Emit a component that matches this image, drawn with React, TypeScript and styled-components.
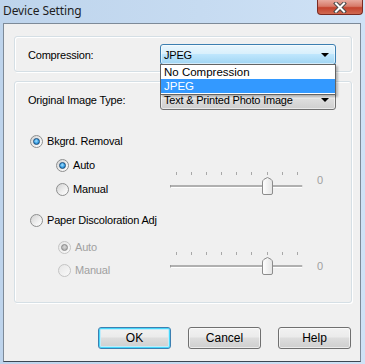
import * as React from "react";
import styled, { createGlobalStyle } from "styled-components";

const GlobalStyle = createGlobalStyle`
  html, body {
    margin: 0;
    padding: 0;
    background: #fff;
  }
  body {
    font-family: "Liberation Sans", Arial, sans-serif;
    font-size: 11px;
    letter-spacing: -0.2px;
    color: #000;
  }
`;

const Window = styled.div`
  width: 365px;
  height: 364px;
  box-sizing: border-box;
  display: flex;
  flex-direction: column;
  padding: 0 4px 2px 3px;
  background: linear-gradient(90deg, #bed4ec 0%, #c6dbf1 55%, #cfe2f6 100%);
`;

const TitleBar = styled.div`
  height: 23px;
  display: flex;
  align-items: flex-start;
  justify-content: space-between;
  flex-shrink: 0;
`;

const Title = styled.div`
  font-family: "Noto Sans", "Open Sans", sans-serif;
  font-size: 12px;
  color: #1e1e1e;
  padding-top: 2px;
  letter-spacing: -0.1px;
`;

const CloseButton = styled.div`
  width: 46px;
  height: 15px;
  margin-right: -2px;
  box-sizing: border-box;
  border: 1px solid #7a2b22;
  border-top: none;
  border-radius: 0 0 4px 4px;
  background: linear-gradient(180deg, #e8a99e 0%, #d77a69 45%, #c4432e 55%, #d06a52 100%);
  display: flex;
  align-items: center;
  justify-content: center;
`;

const Client = styled.div`
  flex: 1;
  display: flex;
  flex-direction: column;
  background: #f0f0f0;
  border: 1px solid #7d8a98;
  border-bottom-color: #3c4753;
`;

const GroupBox = styled.div<{ $top: number; $height: number }>`
  margin: ${(p) => p.$top}px 8px 0 10px;
  height: ${(p) => p.$height}px;
  box-sizing: border-box;
  border: 1px solid #d5dfe5;
  border-radius: 3px;
  box-shadow: inset 1px 1px 0 #fff, 1px 1px 0 #fff;
  padding: 7px 15px 0 13px;
  position: relative;
`;

const FieldRow = styled.div`
  display: flex;
  align-items: center;
  justify-content: space-between;
  height: 21px;
`;

const ComboWrap = styled.div`
  position: relative;
  width: 176px;
  height: 21px;
`;

const Combo = styled.div<{ $open?: boolean }>`
  height: 21px;
  box-sizing: border-box;
  border: 1px solid ${(p) => (p.$open ? "#3c7fb1" : "#707070")};
  border-radius: 3px;
  display: flex;
  align-items: center;
  justify-content: space-between;
  padding: 0 6px 0 3px;
  background: ${(p) =>
    p.$open
      ? "linear-gradient(180deg, #eaf6fd 0%, #d9f0fc 45%, #bee6fd 50%, #a0d5f3 100%)"
      : "linear-gradient(180deg, #f2f2f2 0%, #ebebeb 45%, #dddddd 50%, #cfcfcf 100%)"};
  box-shadow: inset 0 0 0 1px rgba(255, 255, 255, 0.55);
`;

const Arrow = styled.span`
  width: 0;
  height: 0;
  border-left: 4px solid transparent;
  border-right: 4px solid transparent;
  border-top: 4px solid #000;
  margin-top: 1px;
`;

const DropList = styled.div`
  position: absolute;
  top: 20px;
  left: 0;
  width: 176px;
  box-sizing: border-box;
  background: #fff;
  border: 1px solid #646464;
  box-shadow: 2px 2px 2px rgba(0, 0, 0, 0.25);
  z-index: 5;
  padding-bottom: 1px;
`;

const DropItem = styled.div<{ $selected?: boolean }>`
  height: 14px;
  line-height: 14px;
  padding-left: 3px;
  font-size: 11.5px;
  letter-spacing: 0;
  background: ${(p) => (p.$selected ? "#3399ff" : "transparent")};
  color: ${(p) => (p.$selected ? "#fff" : "#000")};
`;

const OptionRow = styled.div<{ $top: number; $indent: number; $disabled?: boolean }>`
  display: flex;
  align-items: center;
  height: 16px;
  margin-top: ${(p) => p.$top}px;
  margin-left: ${(p) => p.$indent}px;
  gap: 4px;
  color: ${(p) => (p.$disabled ? "#a0a0a0" : "#000")};
`;

const RadioCircle = styled.span<{ $disabled?: boolean }>`
  width: 13px;
  height: 13px;
  box-sizing: border-box;
  border-radius: 50%;
  border: 1px solid ${(p) => (p.$disabled ? "#c4c4c4" : "#8e8f8f")};
  background: ${(p) =>
    p.$disabled
      ? "linear-gradient(135deg, #e6e6e6, #fafafa)"
      : "linear-gradient(135deg, #d2d2d2 0%, #f0f0f0 60%, #ffffff 100%)"};
  display: flex;
  align-items: center;
  justify-content: center;
  flex-shrink: 0;
`;

const RadioDot = styled.span<{ $disabled?: boolean }>`
  width: 7px;
  height: 7px;
  border-radius: 50%;
  box-sizing: border-box;
  border: 1px solid ${(p) => (p.$disabled ? "#8a8a8a" : "#1b4d7b")};
  background: ${(p) =>
    p.$disabled
      ? "radial-gradient(circle at 50% 40%, #d8d8d8 0%, #a4a4a4 100%)"
      : "radial-gradient(circle at 45% 40%, #a8e2ff 0%, #38a0e6 55%, #1668a8 100%)"};
`;

const SubBlock = styled.div<{ $top: number }>`
  display: grid;
  grid-template-columns: 112px 137px auto;
  margin-top: ${(p) => p.$top}px;
  margin-left: 28px;
`;

const RadioColumn = styled.div`
  display: flex;
  flex-direction: column;
`;

const SliderBox = styled.div<{ $top: number }>`
  position: relative;
  height: 24px;
  margin-top: ${(p) => p.$top}px;
`;

const Ticks = styled.div`
  display: flex;
  gap: 14.1px;
  padding-left: 8px;
  height: 3px;
`;

const Tick = styled.span`
  width: 1px;
  height: 3px;
  background: #a8a8a8;
`;

const Track = styled.div`
  position: absolute;
  left: 2px;
  right: 2px;
  top: 13px;
  height: 2px;
  background: #b0b0b0;
  border-bottom: 1px solid #ffffff;
  border-left: 1px solid #9a9a9a;
  border-right: 1px solid #e0e0e0;
`;

const Thumb = styled.svg`
  position: absolute;
  top: 5px;
`;

const SliderValue = styled.div<{ $top: number }>`
  margin-top: ${(p) => p.$top}px;
  padding-left: 12px;
  color: #a0a0a0;
  font-size: 11px;
`;

const ButtonRow = styled.div`
  display: flex;
  justify-content: flex-end;
  gap: 17px;
  margin-top: 24px;
  padding-right: 9px;
`;

const Button = styled.div<{ $default?: boolean }>`
  width: 73px;
  height: 22px;
  box-sizing: border-box;
  border: 1px solid ${(p) => (p.$default ? "#3c7fb1" : "#707070")};
  border-radius: 3px;
  display: flex;
  align-items: center;
  justify-content: center;
  font-size: 12px;
  letter-spacing: 0;
  background: linear-gradient(180deg, #f2f2f2 0%, #ebebeb 45%, #dddddd 50%, #cfcfcf 100%);
  box-shadow: ${(p) =>
    p.$default ? "inset 0 0 0 1px #48d8fb, inset 0 0 0 2px #c2ecfa" : "inset 0 0 0 1px rgba(255,255,255,0.6)"};
`;

const Radio = ({
  checked,
  disabled,
}: {
  checked?: boolean;
  disabled?: boolean;
}) => (
  <RadioCircle $disabled={disabled}>{checked && <RadioDot $disabled={disabled} />}</RadioCircle>
);

const Slider = ({ value, top }: { value: number; top: number }) => {
  const tickCount = 9;
  const left = 8 + value * 15.1 - 5;
  return (
    <SliderBox $top={top}>
      <Ticks>
        {Array.from({ length: tickCount }).map((_, i) => (
          <Tick key={i} />
        ))}
      </Ticks>
      <Track />
      <Thumb width="11" height="18" viewBox="0 0 11 18" style={{ left }}>
        <defs>
          <linearGradient id={`tg${top}`} x1="0" y1="0" x2="1" y2="0">
            <stop offset="0" stopColor="#ffffff" />
            <stop offset="1" stopColor="#e4e4e4" />
          </linearGradient>
        </defs>
        <path
          d="M0.5 5 Q0.5 3.5 2 2.3 L5.5 0.5 L9 2.3 Q10.5 3.5 10.5 5 V16 Q10.5 17.5 9 17.5 H2 Q0.5 17.5 0.5 16 Z"
          fill={`url(#tg${top})`}
          stroke="#8c8c8c"
        />
      </Thumb>
    </SliderBox>
  );
};

const App = () => (
  <>
    <GlobalStyle />
    <Window>
      <TitleBar>
        <Title>Device Setting</Title>
        <CloseButton>
          <svg width="14" height="11" viewBox="0 0 14 11">
            <path d="M3 1.5 L11 9.5 M11 1.5 L3 9.5" stroke="#4a4a4a" strokeWidth="4" strokeLinecap="square" />
            <path d="M3 1.5 L11 9.5 M11 1.5 L3 9.5" stroke="#ffffff" strokeWidth="2" strokeLinecap="square" />
          </svg>
        </CloseButton>
      </TitleBar>
      <Client>
        <GroupBox $top={12} $height={36}>
          <FieldRow>
            <span>Compression:</span>
            <ComboWrap>
              <Combo $open>
                <span>JPEG</span>
                <Arrow />
              </Combo>
              <DropList>
                <DropItem>No Compression</DropItem>
                <DropItem $selected>JPEG</DropItem>
              </DropList>
            </ComboWrap>
          </FieldRow>
        </GroupBox>
        <GroupBox $top={9} $height={222}>
          <FieldRow>
            <span>Original Image Type:</span>
            <ComboWrap>
              <Combo>
                <span>Text &amp; Printed Photo Image</span>
                <Arrow />
              </Combo>
            </ComboWrap>
          </FieldRow>
          <OptionRow $top={23} $indent={2}>
            <Radio checked />
            <span>Bkgrd. Removal</span>
          </OptionRow>
          <SubBlock $top={8}>
            <RadioColumn>
              <OptionRow $top={0} $indent={0}>
                <Radio checked />
                <span>Auto</span>
              </OptionRow>
              <OptionRow $top={8} $indent={0}>
                <Radio />
                <span>Manual</span>
              </OptionRow>
            </RadioColumn>
            <Slider value={6} top={15} />
            <SliderValue $top={17}>0</SliderValue>
          </SubBlock>
          <OptionRow $top={15} $indent={2}>
            <Radio />
            <span>Paper Discoloration Adj</span>
          </OptionRow>
          <SubBlock $top={11}>
            <RadioColumn>
              <OptionRow $top={0} $indent={2} $disabled>
                <Radio checked disabled />
                <span>Auto</span>
              </OptionRow>
              <OptionRow $top={7} $indent={2} $disabled>
                <Radio disabled />
                <span>Manual</span>
              </OptionRow>
            </RadioColumn>
            <Slider value={6} top={13} />
            <SliderValue $top={21}>0</SliderValue>
          </SubBlock>
        </GroupBox>
        <ButtonRow>
          <Button $default>OK</Button>
          <Button>Cancel</Button>
          <Button>Help</Button>
        </ButtonRow>
      </Client>
    </Window>
  </>
);

export default App;
